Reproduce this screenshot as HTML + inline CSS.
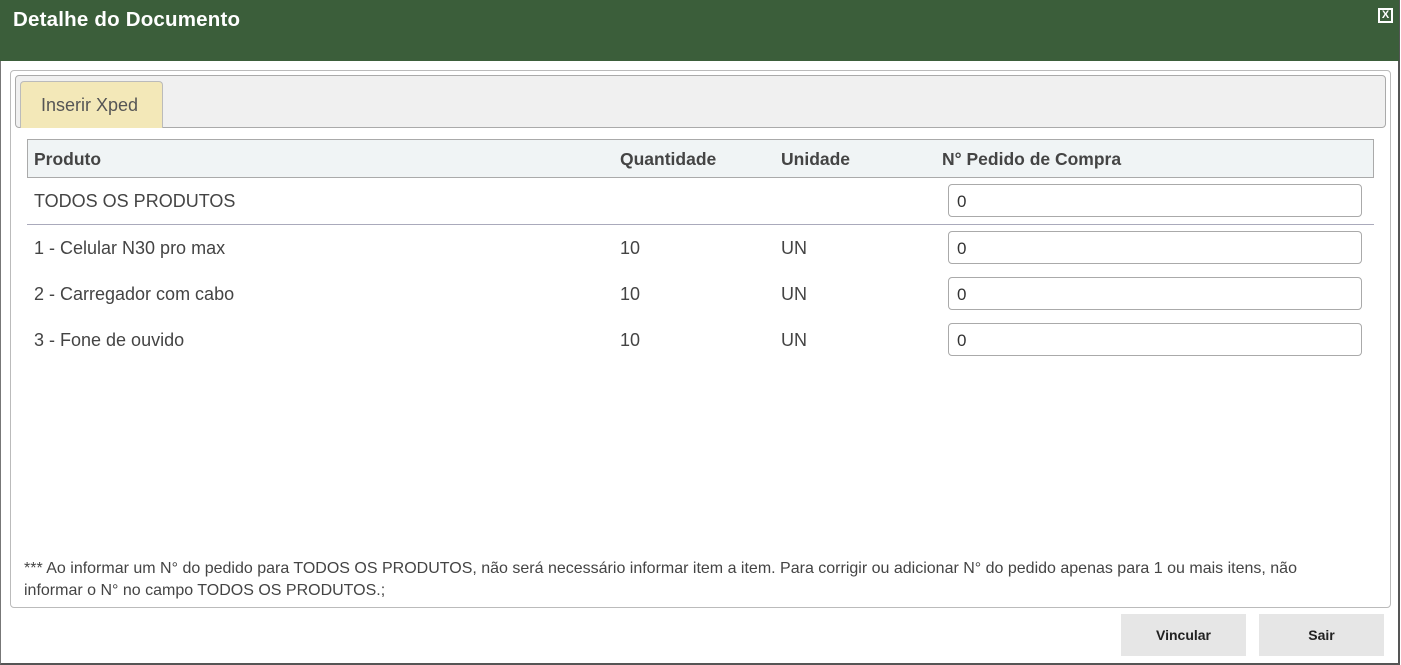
<!DOCTYPE html>
<html><head><meta charset="utf-8"><style>
*{box-sizing:border-box;margin:0;padding:0}
body{width:1401px;height:665px;background:#fff;font-family:"Liberation Sans",sans-serif;color:#444;position:relative;overflow:hidden}
.frame{position:absolute;left:0;top:0;width:1400px;height:665px;border-left:1px solid #777;border-right:2px solid #555;border-bottom:2px solid #555}
.hdr{position:absolute;left:0;top:0;width:1399px;height:61px;background:#3b5e3a}
.hdr h1{position:absolute;left:13px;top:8px;font-size:20.5px;font-weight:bold;color:#fff;letter-spacing:0.2px}
.x{position:absolute;left:1378px;top:8px;width:15px;height:15px;border:2px solid #fff;color:#fff;font-size:11px;font-weight:bold;line-height:11px;text-align:center}
.panel{position:absolute;left:10px;top:70px;width:1381px;height:538px;border:1px solid #bbb;border-radius:4px}
.tabbar{position:absolute;left:15px;top:75px;width:1371px;height:53px;background:#f0f0f0;border:1px solid #aaa;border-radius:4px}
.tab{position:absolute;left:20px;top:81px;width:143px;height:47px;background:#f3e8b8;border:1px solid #bbb;border-bottom:none;border-radius:4px 4px 0 0;font-size:18px;color:#555;padding:13px 0 0 20px}
.th{position:absolute;left:27px;top:139px;width:1347px;height:39px;background:#f0f4f5;border:1px solid #aaa}
.t{position:absolute;font-size:18px;white-space:nowrap}
.b{font-weight:bold;color:#444;font-size:17.5px}
.sep{position:absolute;left:27px;top:224px;width:1347px;height:1px;background:#aab}
.in{position:absolute;left:948px;width:414px;height:33px;border:1px solid #aaa;border-radius:4px;font-size:17px;color:#333;padding:7px 0 0 8px}
.note{position:absolute;left:24px;top:558px;width:1350px;font-size:16px;line-height:22px;color:#444;white-space:nowrap}
.btn{position:absolute;top:614px;width:125px;height:42px;background:#e6e6e6;font-size:14px;font-weight:bold;color:#222;text-align:center;line-height:42px}
</style></head><body>
<div class="frame"></div>
<div class="hdr"><h1>Detalhe do Documento</h1><div class="x">X</div></div>
<div class="panel"></div>
<div class="tabbar"></div>
<div class="tab">Inserir Xped</div>
<div class="th"></div>
<div class="t b" style="left:34px;top:149px">Produto</div>
<div class="t b" style="left:620px;top:149px">Quantidade</div>
<div class="t b" style="left:781px;top:149px">Unidade</div>
<div class="t b" style="left:942px;top:149px">N° Pedido de Compra</div>
<div class="t" style="left:34px;top:191px">TODOS OS PRODUTOS</div>
<div class="in" style="top:184px">0</div>
<div class="sep"></div>
<div class="t" style="left:34px;top:238px">1 - Celular N30 pro max</div><div class="t" style="left:620px;top:238px">10</div><div class="t" style="left:781px;top:238px">UN</div>
<div class="in" style="top:231px">0</div>
<div class="t" style="left:34px;top:284px">2 - Carregador com cabo</div><div class="t" style="left:620px;top:284px">10</div><div class="t" style="left:781px;top:284px">UN</div>
<div class="in" style="top:277px">0</div>
<div class="t" style="left:34px;top:330px">3 - Fone de ouvido</div><div class="t" style="left:620px;top:330px">10</div><div class="t" style="left:781px;top:330px">UN</div>
<div class="in" style="top:323px">0</div>
<div class="note">*** Ao informar um N° do pedido para TODOS OS PRODUTOS, não será necessário informar item a item. Para corrigir ou adicionar N° do pedido apenas para 1 ou mais itens, não<br>informar o N° no campo TODOS OS PRODUTOS.;</div>
<div class="btn" style="left:1121px">Vincular</div>
<div class="btn" style="left:1259px">Sair</div>
</body></html>
